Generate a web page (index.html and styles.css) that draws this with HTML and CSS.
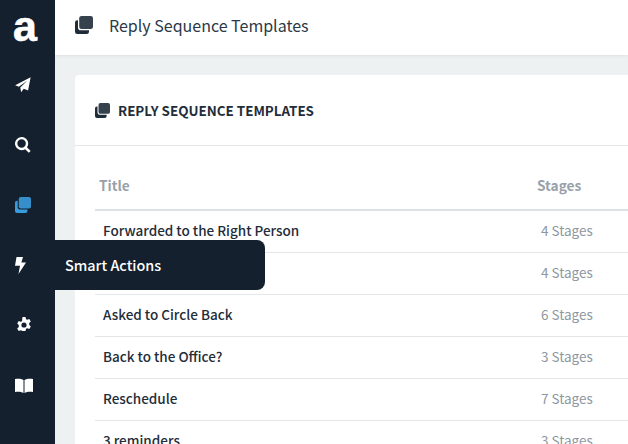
FILE: index.html
```html
<!DOCTYPE html>
<html lang="en">
<head>
  <meta charset="UTF-8">
  <title>Reply Sequence Templates</title>
  <link rel="stylesheet" href="styles.css">
</head>
<body>
  <svg class="defs" width="0" height="0">
    <symbol id="clone" viewBox="0 0 18 18">
      <path class="clone-front" d="M6.500 0h9.200A2.300 2.300 0 0 1 18 2.300v8.400a2.300 2.300 0 0 1-2.300 2.300H6.500a2.300 2.300 0 0 1-2.300-2.300V2.300A2.300 2.300 0 0 1 6.500 0z"/>
      <path d="M3 4.200v7.200A2.800 2.800 0 0 0 5.800 14.200H14v1.500a2.300 2.300 0 0 1-2.300 2.300H2.300A2.300 2.300 0 0 1 0 15.700V6.500a2.300 2.300 0 0 1 2.300-2.300z"/>
    </symbol>
  </svg>

  <nav class="sidebar">
    <div class="logo">a</div>
    <a class="nav-item"><svg width="16" height="16" viewBox="0 0 17 17"><path d="M16.600.2 13.900 14.400 9.300 12.500 6.500 16.300 5.600 11.100 13.300 3.600 4.100 10.300.2 8.700z"/></svg></a>
    <a class="nav-item"><svg width="16" height="16" viewBox="0 0 17 17"><path fill-rule="evenodd" d="M7 0a7 7 0 0 1 5.700 11l3.900 3.900-1.900 1.900-3.900-3.900A7 7 0 1 1 7 0zm0 2.500a4.500 4.500 0 1 0 0 9 4.500 4.500 0 0 0 0-9z"/></svg></a>
    <a class="nav-item active"><svg width="16" height="16"><use href="#clone"/></svg></a>
    <a class="nav-item"><svg width="11" height="17" viewBox="0 0 11 17"><path d="M1.500 0H8L6.400 5.500H11L3.500 17 5 8.800H0z"/></svg></a>
    <a class="nav-item nav-gear"><svg width="16" height="16" viewBox="0 0 16 16"><path fill-rule="evenodd" d="M6.500 0h3l.5 2.200 1.200.6 2.100-.8 1.500 2.600-1.600 1.500v1.800l1.600 1.500-1.500 2.600-2.100-.8-1.200.6-.5 2.200h-3L6 13.800l-1.200-.6-2.100.8-1.500-2.600 1.600-1.500V8.100L1.200 6.600l1.500-2.600 2.100.8L6 4.200zM8 5.400a2.600 2.600 0 1 0 0 5.200 2.600 2.600 0 0 0 0-5.200z"/></svg></a>
    <a class="nav-item"><svg width="18" height="15" viewBox="0 0 18 15"><path d="M0 1C3 .4 6.300.6 8.500 2v13C6.300 13.700 3 13.500 0 14z"/><path d="M18 1c-3-.6-6.300-.4-8.500 1v13c2.200-1.300 5.500-1.500 8.500-1z"/></svg></a>
  </nav>

  <div class="tooltip">Smart Actions</div>

  <div class="main">
    <header class="topbar">
      <svg class="topbar-icon" width="18" height="18"><use href="#clone"/></svg>
      <span>Reply Sequence Templates</span>
    </header>

    <div class="content">
      <section class="card">
        <div class="card-head">
          <svg width="15" height="15"><use href="#clone"/></svg>
          <h2>REPLY SEQUENCE TEMPLATES</h2>
        </div>
        <div class="card-body">
          <table>
            <thead>
              <tr><th class="col-title">Title</th><th class="col-stages">Stages</th></tr>
            </thead>
            <tbody>
              <tr><td class="name">Forwarded to the Right Person</td><td class="stages">4 Stages</td></tr>
              <tr><td class="name">Not Interested</td><td class="stages">4 Stages</td></tr>
              <tr><td class="name">Asked to Circle Back</td><td class="stages">6 Stages</td></tr>
              <tr><td class="name">Back to the Office?</td><td class="stages">3 Stages</td></tr>
              <tr><td class="name">Reschedule</td><td class="stages">7 Stages</td></tr>
              <tr><td class="name">3 reminders</td><td class="stages">3 Stages</td></tr>
            </tbody>
          </table>
        </div>
      </section>
    </div>
  </div>
</body>
</html>
```

FILE: styles.css
```css
html, body {
  height: 100%;
}

body {
  margin: 0;
  display: flex;
  overflow: hidden;
  font-family: "Noto Sans CJK SC", "Noto Sans", sans-serif;
  color: #1f2d3a;
  background: #eef1f2;
}

.defs {
  position: absolute;
}

.clone-front {
  fill-opacity: 0.9;
}

.sidebar {
  width: 55px;
  flex: none;
  box-sizing: border-box;
  padding-left: 15px;
  background: #14202e;
  display: flex;
  flex-direction: column;
  height: 100%;
}

.logo {
  height: 55px;
  margin-left: -2px;
  color: #fff;
  font: bold 43px/53px "Liberation Sans", sans-serif;
  -webkit-text-stroke: 0.6px #fff;
}

.nav-item {
  height: 60px;
  display: flex;
  align-items: center;
  fill: #fff;
}

.nav-item.active {
  fill: #3a9bdc;
}

.nav-gear {
  padding-left: 1px;
}

.tooltip {
  position: absolute;
  left: 55px;
  top: 240px;
  width: 200px;
  height: 50px;
  padding-left: 10px;
  background: #14202e;
  border-radius: 0 8px 8px 0;
  color: #fff;
  font-size: 14.4px;
  font-weight: 500;
  line-height: 50px;
}

.main {
  flex: 1;
  min-width: 0;
}

.topbar {
  height: 55px;
  box-sizing: border-box;
  padding-bottom: 5px;
  background: #fff;
  display: flex;
  align-items: center;
  box-shadow: 0 1px 3px rgba(20, 32, 46, 0.08);
  font-size: 16px;
  line-height: 20px;
  color: #2b3947;
  fill: #1f2d3a;
}

.topbar-icon {
  margin: 0 16px 0 20px;
}

.content {
  padding: 20px 0 0 20px;
}

.card {
  width: 640px;
  background: #fff;
  border-radius: 4px 0 0 0;
}

.card-head {
  height: 71px;
  display: flex;
  align-items: center;
  gap: 8px;
  padding-left: 20px;
  border-bottom: 1px solid #e4e7ea;
  box-sizing: border-box;
  fill: #1f2d3a;
}

.card-head h2 {
  margin: 0;
  font-size: 13.4px;
  font-weight: 700;
  line-height: 20px;
}

.card-body {
  padding: 20px 0 0 20px;
}

table {
  width: 100%;
  border-collapse: collapse;
}

th {
  height: 44px;
  box-sizing: border-box;
  padding: 0 0 6px;
  text-align: left;
  font-size: 13.7px;
  font-weight: 700;
  line-height: 20px;
  color: #98a1aa;
  border-bottom: 2px solid #dde1e4;
}

.col-title {
  padding-left: 4px;
  width: 442px;
}

td {
  height: 42px;
  box-sizing: border-box;
  padding: 0 0 2px;
  border-bottom: 1px solid #e4e7ea;
  font-size: 13.5px;
  line-height: 20px;
}

.name {
  padding-left: 8px;
  font-weight: 500;
}

.stages {
  padding-left: 4px;
  color: #8e979f;
}
```
